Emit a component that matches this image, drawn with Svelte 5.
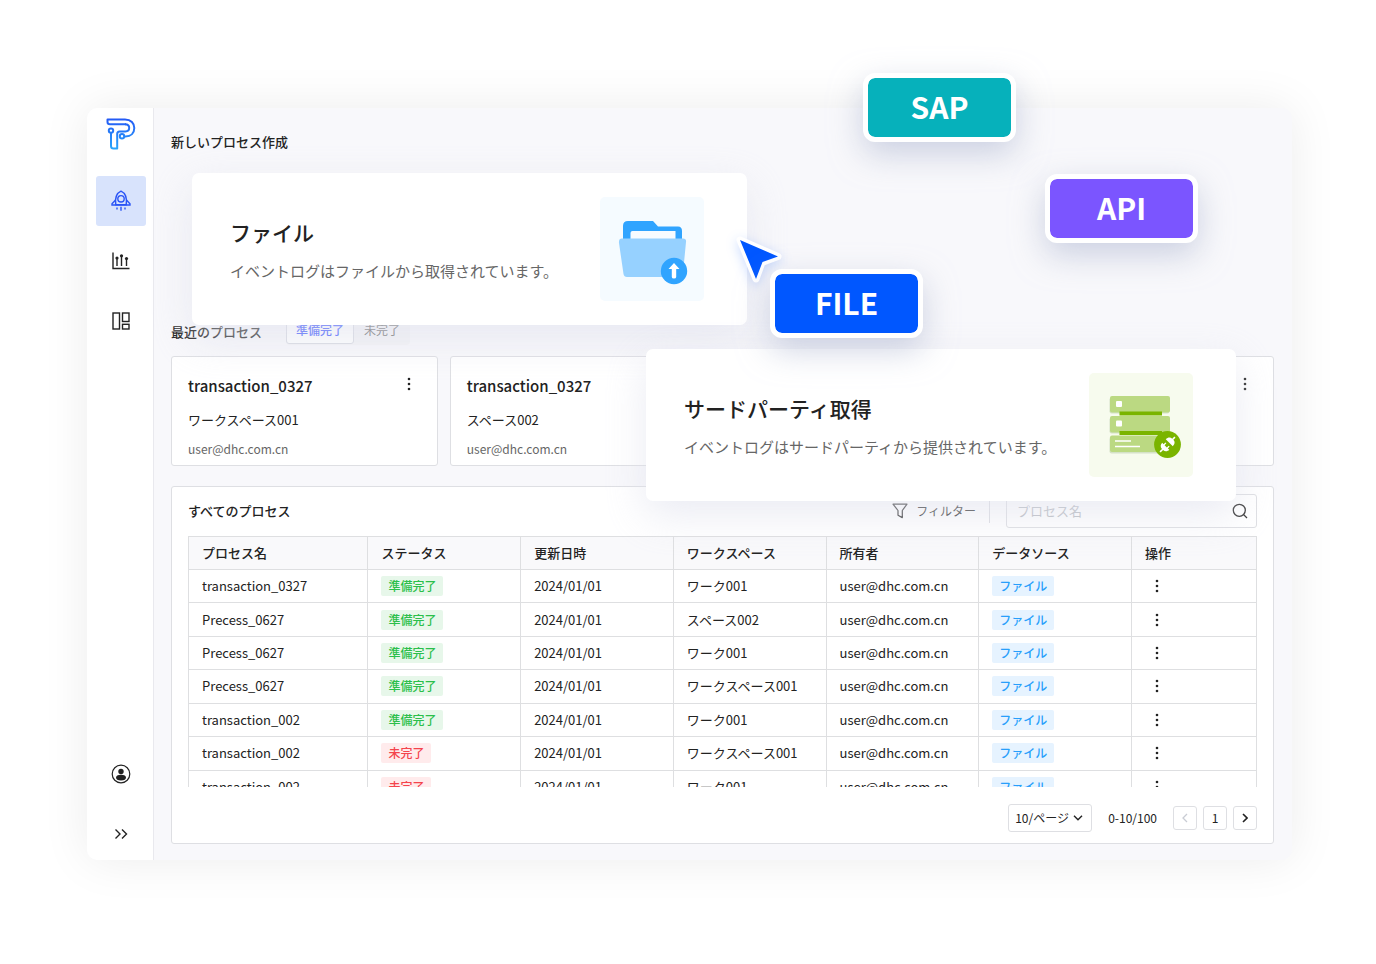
<script lang="ts">
  /**
   * Process creation dashboard with floating data source cards.
   */
  type Status = 'ready' | 'pending';

  interface Process {
    name: string;
    status: Status;
    workspace: string;
  }

  const statusLabels: Record<Status, string> = {
    ready: '準備完了',
    pending: '未完了',
  };

  const columns = [
    'プロセス名',
    'ステータス',
    '更新日時',
    'ワークスペース',
    '所有者',
    'データソース',
    '操作',
  ];

  // null renders an empty card
  const recent = [
    { name: 'transaction_0327', workspace: 'ワークスペース001' },
    { name: 'transaction_0327', workspace: 'スペース002' },
    null,
    null,
  ];

  const processes: Process[] = [
    { name: 'transaction_0327', status: 'ready', workspace: 'ワーク001' },
    { name: 'Precess_0627', status: 'ready', workspace: 'スペース002' },
    { name: 'Precess_0627', status: 'ready', workspace: 'ワーク001' },
    { name: 'Precess_0627', status: 'ready', workspace: 'ワークスペース001' },
    { name: 'transaction_002', status: 'ready', workspace: 'ワーク001' },
    { name: 'transaction_002', status: 'pending', workspace: 'ワークスペース001' },
    { name: 'transaction_002', status: 'pending', workspace: 'ワーク001' },
  ];

  let activeTab: Status = $state('ready');
  let search = $state('');
  let visible = $derived(processes.filter((p) => p.name.includes(search)));
</script>

{#snippet more()}
  <button class="more" aria-label="メニュー">
    <svg width="4" height="14" viewBox="0 0 4 14" fill="currentColor">
      <circle cx="2" cy="2" r="1.3" />
      <circle cx="2" cy="7" r="1.3" />
      <circle cx="2" cy="12" r="1.3" />
    </svg>
  </button>
{/snippet}

<div class="page">
  <div class="window">
    <nav class="sidebar">
      <a class="logo" href="#home" aria-label="ホーム">
        <svg width="30" height="32" viewBox="0 0 30 32" fill="none">
          <defs>
            <linearGradient id="logo-fill" x1="0" y1="0" x2="0" y2="32" gradientUnits="userSpaceOnUse">
              <stop offset="0" stop-color="#2457f5" />
              <stop offset="1" stop-color="#28a8fb" />
            </linearGradient>
          </defs>
          <g stroke="url(#logo-fill)" stroke-width="2" stroke-linejoin="round">
            <path d="M20 6.200 H4 C2.500 6.200 1.500 5.500 1.500 4 V1.500 H19 C25 1.500 28.300 5.300 28.300 10 C28.300 15 25 18.400 19.500 18.400 H18" />
            <path d="M19 6.200 C22 6.200 23.200 7.800 23.200 9.800 C23.200 12.300 21.800 13.400 19.500 13.400 H13.500 C11.700 13.400 11.200 14.300 11.200 16 V30.500 H7.500 C5.700 30.500 5 29.700 5 28 V15" />
            <circle cx="5" cy="12.600" r="2.200" />
            <circle cx="16" cy="18.200" r="2.200" />
          </g>
        </svg>
      </a>
      <a class="nav-item active" href="#create" aria-label="プロセス作成">
        <svg width="20" height="22" viewBox="0 0 20 22" fill="none" stroke="#2b55f6" stroke-width="1.4">
          <path d="M4.800 14.800 C3.800 8 6 3 10 1.200 C14 3 16.200 8 15.200 14.800 Z" />
          <path d="M4.600 10 L1 13.800 V15 H19 V13.800 L15.400 10" />
          <circle cx="10" cy="8.800" r="3.200" />
          <path d="M10 16.800 V20.800 M6 17.400 V19.600 M14 17.400 V19.600" />
        </svg>
      </a>
      <a class="nav-item" href="#analysis" aria-label="分析">
        <svg width="18" height="18" viewBox="0 0 18 18" fill="none" stroke="#222" stroke-width="1.4">
          <path d="M1 .5 V16.500 H17.500" />
          <path d="M5 6 V14 M9.500 4 V14 M14.500 6.500 V14" />
          <g fill="#222" stroke="none">
            <circle cx="5" cy="6" r="1.600" />
            <circle cx="9.500" cy="3.800" r="1.600" />
            <circle cx="14.500" cy="6.500" r="1.600" />
          </g>
        </svg>
      </a>
      <a class="nav-item" href="#dashboard" aria-label="ダッシュボード">
        <svg width="18" height="18" viewBox="0 0 18 18" fill="none" stroke="#222" stroke-width="1.4">
          <rect x="1" y="1" width="6.500" height="16" />
          <rect x="10.500" y="1" width="6.500" height="8.500" />
          <rect x="10.500" y="12.300" width="6.500" height="4.700" />
        </svg>
      </a>
      <a class="nav-item account" href="#account" aria-label="アカウント">
        <svg width="20" height="20" viewBox="0 0 20 20" fill="none">
          <circle cx="10" cy="10" r="8.800" stroke="#222" stroke-width="1.2" />
          <circle cx="10" cy="7.500" r="2.700" fill="#222" />
          <ellipse cx="10" cy="13.600" rx="5" ry="2.900" fill="#222" />
        </svg>
      </a>
      <button class="nav-item" aria-label="メニューを開く">
        <svg width="14" height="12" viewBox="0 0 14 12" fill="none" stroke="#222" stroke-width="1.4">
          <path d="M1.500 1.500 L6 6 L1.500 10.500 M8 1.500 L12.500 6 L8 10.500" />
        </svg>
      </button>
    </nav>

    <main>
      <section class="create">
        <h2>新しいプロセス作成</h2>
      </section>

      <section class="recent">
        <header>
          <h2>最近のプロセス</h2>
          <div class="tabs">
            <button class:active={activeTab === 'ready'} onclick={() => (activeTab = 'ready')}>準備完了</button>
            <button class:active={activeTab === 'pending'} onclick={() => (activeTab = 'pending')}>未完了</button>
          </div>
        </header>
        <div class="cards">
          {#each recent as item}
            <article class="card">
              <div class="card-head">
                <h3>{item?.name ?? ''}</h3>
                {@render more()}
              </div>
              {#if item}
                <p>{item.workspace}</p>
                <small>user@dhc.com.cn</small>
              {/if}
            </article>
          {/each}
        </div>
      </section>

      <section class="panel">
        <header>
          <h2>すべてのプロセス</h2>
          <button class="filter">
            <svg width="16" height="16" viewBox="0 0 16 16" fill="none" stroke="currentColor" stroke-width="1.2" stroke-linejoin="round">
              <path d="M1 1.200 H15 L10.300 7.500 V14.600 L6 12.300 V7.500 Z" />
            </svg>
            フィルター
          </button>
          <label class="search">
            <input type="text" placeholder="プロセス名" aria-label="プロセス名" bind:value={search} />
            <svg width="16" height="16" viewBox="0 0 16 16" fill="none" stroke="#333" stroke-width="1.3">
              <circle cx="7.300" cy="7.300" r="6" />
              <path d="M11.500 11.500 L15 15" />
            </svg>
          </label>
        </header>

        <div class="table-wrapper">
          <table>
            <thead>
              <tr>
                {#each columns as col}
                  <th>{col}</th>
                {/each}
              </tr>
            </thead>
            <tbody>
              {#each visible as row}
                <tr>
                  <td>{row.name}</td>
                  <td><span class="tag {row.status}">{statusLabels[row.status]}</span></td>
                  <td>2024/01/01</td>
                  <td>{row.workspace}</td>
                  <td>user@dhc.com.cn</td>
                  <td><span class="tag file">ファイル</span></td>
                  <td>{@render more()}</td>
                </tr>
              {/each}
            </tbody>
          </table>
        </div>

        <footer>
          <label class="page-size">
            <select aria-label="表示件数">
              <option>10/ページ</option>
              <option>20/ページ</option>
            </select>
            <svg width="10" height="6" viewBox="0 0 10 6" fill="none" stroke="#222" stroke-width="1.4">
              <path d="M1 .8 L5 4.800 L9 .8" />
            </svg>
          </label>
          <span class="range">0-10/100</span>
          <div class="pager">
            <button disabled aria-label="前へ">
              <svg width="6" height="10" viewBox="0 0 6 10" fill="none" stroke="currentColor" stroke-width="1.3">
                <path d="M5 1 L1 5 L5 9" />
              </svg>
            </button>
            <button>1</button>
            <button aria-label="次へ">
              <svg width="6" height="10" viewBox="0 0 6 10" fill="none" stroke="currentColor" stroke-width="1.6">
                <path d="M1 1 L5 5 L1 9" />
              </svg>
            </button>
          </div>
        </footer>
      </section>
    </main>

    <article class="source source-file">
      <div>
        <h3>ファイル</h3>
        <p>イベントログはファイルから取得されています。</p>
      </div>
      <div class="picture blue">
        <svg width="104" height="104" viewBox="0 0 104 104">
          <path d="M23 44 V29 Q23 24 28 24 H53 L58 29.500 H78 Q82 29.500 82 34 V44 Z" fill="#30a4ff" />
          <path d="M30.500 44 V36 Q30.500 34 32.500 34 H75.500 V44 Z" fill="#f7fbff" />
          <path d="M22 41.500 H83 Q86.500 41.500 86 45 L83 76 Q82.500 80 79 80 H27 Q24 80 23.500 77 L19 46 Q18.500 41.500 22 41.500 Z" fill="#96d1ff" />
          <circle cx="74" cy="74" r="13.200" fill="#30a4ff" />
          <path d="M74 66 L79.500 72 H76.200 V80 Q76.200 81.500 74 81.500 Q71.800 81.500 71.800 80 V72 H68.500 Z" fill="#fff" />
        </svg>
      </div>
    </article>

    <article class="source source-third">
      <div>
        <h3>サードパーティ取得</h3>
        <p>イベントログはサードパーティから提供されています。</p>
      </div>
      <div class="picture green">
        <svg width="104" height="104" viewBox="0 0 104 104">
          <g fill="#d5e2c8">
            <rect x="20.500" y="24.500" width="60" height="16" rx="2" />
            <rect x="20.500" y="44.500" width="60" height="16" rx="2" />
            <rect x="20.500" y="64" width="60" height="16.500" rx="2" />
          </g>
          <g fill="#bbd982">
            <rect x="21" y="23" width="60" height="16.500" rx="2" />
            <rect x="21" y="43" width="60" height="16.500" rx="2" />
            <rect x="21" y="62.500" width="60" height="16.500" rx="2" />
          </g>
          <path d="M30.500 38.500 H73 V42.500 H30.500 Z M30.500 58 H73 V62 H30.500 Z" fill="#7ab400" />
          <rect x="27" y="28" width="6" height="6" rx="1" fill="#fff" />
          <rect x="27" y="47.500" width="6" height="6" rx="1" fill="#fff" />
          <path d="M26 68 H42 M26 73.500 H51" stroke="#fff" stroke-width="1.6" />
          <circle cx="78.500" cy="71.500" r="13.400" fill="#7ab400" />
          <g transform="translate(78.500 71.500) rotate(-45)" fill="#fff">
            <path d="M-10.500 -.8 H-7 C-7 -3.500 -5 -5 -2.500 -5 V-3 H0 V-1.600 H-2.500 V1.600 H0 V3 H-2.500 V5 C-5 5 -7 3.500 -7 .8 H-10.500 Z" />
            <path d="M10.500 -.8 H7.500 C7.500 -3.500 5.500 -5 2.500 -5 V5 C5.500 5 7.500 3.500 7.500 .8 H10.500 Z" />
          </g>
        </svg>
      </div>
    </article>

    <span class="chip sap">SAP</span>
    <span class="chip api">API</span>
    <svg class="cursor" width="52" height="56" viewBox="0 0 52 56">
      <path
        d="M8 7 L46 23.500 L30 29.500 L24 46 Z"
        fill="#fff"
        stroke="#fff"
        stroke-width="7"
        stroke-linejoin="round"
      />
      <path d="M8 7 L46 23.500 L30.500 29 L24 46 Z" fill="#0057ff" />
    </svg>
    <span class="chip local">FILE</span>
  </div>
</div>

<style>
  :global(body) {
    margin: 0;
    background: #fff;
  }

  .page {
    padding: 108px 84px 104px 87px;
    color: #222;
    font-family: 'Noto Sans CJK JP', 'Noto Sans', sans-serif;
    font-size: 13px;
    line-height: 20px;
  }

  .page * {
    box-sizing: border-box;
  }

  .window {
    position: relative;
    display: flex;
    border-radius: 10px;
    background: #f8f8fb;
    box-shadow: 0 0 48px rgba(0, 0, 0, 0.08);
  }

  h2,
  h3,
  p {
    margin: 0;
  }

  h2 {
    font-size: 13px;
    font-weight: 500;
  }

  button,
  input,
  select {
    margin: 0;
    padding: 0;
    border: 0;
    background: none;
    color: inherit;
    font: inherit;
  }

  /* Sidebar */
  .sidebar {
    display: flex;
    flex: none;
    flex-direction: column;
    align-items: center;
    gap: 10px;
    width: 67px;
    padding: 10px 0 1px 2px;
    border-right: 1px solid #e9e9ee;
    border-radius: 10px 0 0 10px;
    background: #fff;
  }

  .logo {
    height: 48px;
  }

  .nav-item {
    display: flex;
    align-items: center;
    justify-content: center;
    width: 50px;
    height: 50px;
    border-radius: 3px;
  }

  .nav-item.active {
    background: #d8e3fc;
  }

  .account {
    margin-top: auto;
  }

  /* Main */
  main {
    flex: 1;
    min-width: 0;
    padding: 24px 18px 16px 17px;
  }

  .create {
    min-height: 184px;
  }

  .recent header {
    display: flex;
    align-items: center;
    gap: 24px;
    height: 32px;
    margin-bottom: 8px;
  }

  .tabs {
    display: flex;
    align-self: flex-start;
    height: 29px;
    border-radius: 4px;
    background: #f3f3f6;
  }

  .tabs button {
    height: 28px;
    padding: 0 9px;
    border: 1px solid transparent;
    border-radius: 3px;
    color: #666;
    font-size: 12px;
  }

  .tabs button.active {
    border-color: #d8dae2;
    background: #fff;
    color: #4058ff;
    font-weight: 500;
  }

  .cards {
    display: grid;
    grid-template-columns: repeat(4, 1fr);
    gap: 12px;
    margin-bottom: 20px;
  }

  .card,
  .panel {
    border: 1px solid #dedfe3;
    border-radius: 3px;
    background: #fff;
  }

  .card {
    padding: 18px 16px 7px;
  }

  .card-head {
    display: flex;
    justify-content: space-between;
    padding-right: 4px;
  }

  .card h3 {
    font-size: 15px;
    font-weight: 500;
    line-height: 22px;
  }

  .card p {
    margin: 13px 0 10px;
  }

  .card small {
    display: block;
    color: #666;
    font-size: 12px;
    line-height: 18px;
  }

  .more {
    display: flex;
    align-items: center;
    justify-content: center;
    width: 16px;
    height: 18px;
  }

  /* Table panel */
  .panel {
    padding: 7px 16px 11px;
  }

  .panel header {
    display: flex;
    align-items: center;
    margin-bottom: 8px;
  }

  .panel h2 {
    flex: 1;
  }

  .filter {
    display: flex;
    align-items: center;
    gap: 8px;
    height: 24px;
    margin-right: 16px;
    padding-right: 13px;
    border-right: 1px solid #dcdde2;
    color: #333;
    font-size: 12px;
  }

  .search {
    display: flex;
    align-items: center;
    width: 251px;
    height: 34px;
    padding: 0 8px 0 10px;
    border: 1px solid #dedfe3;
    border-radius: 3px;
  }

  .search input {
    flex: 1;
    min-width: 0;
    outline: none;
  }

  .search input::placeholder {
    color: #b9bcc2;
  }

  .table-wrapper {
    height: 251px;
    overflow: hidden;
  }

  table {
    width: 100%;
    height: 268px;
    border-collapse: collapse;
    table-layout: fixed;
  }

  th,
  td {
    width: 14.3%;
    padding: 0 13px;
    border: 1px solid #dedfe1;
    text-align: left;
    white-space: nowrap;
  }

  th:first-child {
    width: 16.8%;
  }

  th:last-child {
    width: auto;
  }

  th {
    height: 33px;
    background: #f9f9fb;
    font-weight: 500;
  }

  td .more {
    margin-left: 4px;
  }

  .tag {
    display: block;
    width: fit-content;
    padding: 0 7px;
    border-radius: 2px;
    font-size: 12px;
    font-weight: 500;
    line-height: 20px;
  }

  .tag.ready {
    background: #e7f7ea;
    color: #2bbf4b;
  }

  .tag.pending {
    background: #ffebec;
    color: #f4444c;
  }

  .tag.file {
    background: #e6f3ff;
    color: #289ffb;
  }

  .panel footer {
    display: flex;
    align-items: center;
    justify-content: flex-end;
    gap: 16px;
    margin-top: 17px;
    font-size: 12px;
  }

  .page-size {
    display: flex;
    align-items: center;
    height: 28px;
    padding: 0 8px 0 6px;
    border: 1px solid #dedfe3;
    border-radius: 3px;
  }

  .page-size select {
    width: 58px;
    appearance: none;
    outline: none;
  }

  .pager {
    display: flex;
    gap: 6px;
  }

  .pager button {
    display: flex;
    align-items: center;
    justify-content: center;
    width: 24px;
    height: 24px;
    border: 1px solid #dedfe3;
    border-radius: 3px;
  }

  .pager button:disabled {
    color: #c9ccd4;
  }

  /* Floating source cards and chips */
  .source {
    position: absolute;
    display: flex;
    align-items: center;
    justify-content: space-between;
    height: 152px;
    padding: 0 43px 0 38px;
    border-radius: 7px;
    background: #fff;
    box-shadow: 0 14px 40px rgba(222, 225, 236, 0.65);
  }

  .source-file {
    top: 65px;
    left: 105px;
    width: 555px;
  }

  .source-third {
    top: 241px;
    left: 559px;
    width: 590px;
  }

  .source h3 {
    font-size: 21px;
    font-weight: 500;
    line-height: 32px;
  }

  .source p {
    margin-top: 11px;
    color: #666;
    font-size: 15px;
    line-height: 24px;
  }

  .picture {
    height: 104px;
    border-radius: 5px;
  }

  .picture.blue {
    background: #f5fbff;
  }

  .picture.green {
    background: #f7fbee;
  }

  .chip {
    position: absolute;
    width: 153px;
    height: 69px;
    border: 5px solid #fff;
    border-radius: 12px;
    background-clip: padding-box;
    box-shadow: 0 12px 32px rgba(180, 187, 212, 0.65);
    color: #fff;
    font-size: 30px;
    font-weight: 700;
    line-height: 57px;
    text-align: center;
  }

  .sap {
    top: -35px;
    left: 776px;
    background-color: #06b1bb;
  }

  .api {
    top: 66px;
    left: 958px;
    background-color: #7b55ff;
  }

  .local {
    top: 161px;
    left: 683px;
    background-color: #0057ff;
  }

  .cursor {
    position: absolute;
    top: 125px;
    left: 645px;
    filter: drop-shadow(0 3px 6px rgba(0, 87, 255, 0.2));
  }
</style>
